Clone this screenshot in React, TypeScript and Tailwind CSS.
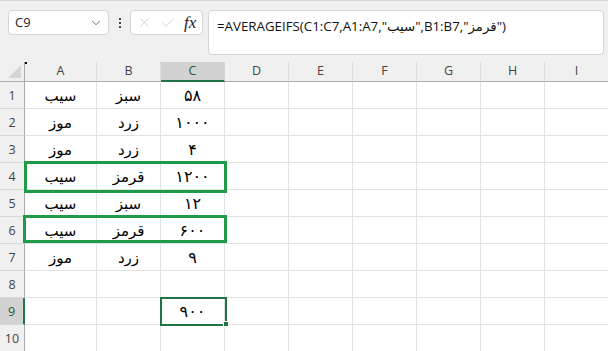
import React from 'react';
import { ChevronDown, X, Check } from 'lucide-react';
import clsx from 'clsx';

const cols = ['A', 'B', 'C', 'D', 'E', 'F', 'G', 'H', 'I'];

// rows 1..10, only A-C hold values
const data: string[][] = [
  ['سیب', 'سبز', '۵۸'],
  ['موز', 'زرد', '۱۰۰۰'],
  ['موز', 'زرد', '۴'],
  ['سیب', 'قرمز', '۱۲۰۰'],
  ['سیب', 'سبز', '۱۲'],
  ['سیب', 'قرمز', '۶۰۰'],
  ['موز', 'زرد', '۹'],
  [],
  ['', '', '۹۰۰'],
  [],
];

const uiFont = { fontFamily: '"Open Sans", "Noto Sans", sans-serif' };
const isNum = (v: string) => /^[۰-۹]+$/.test(v);

const Toolbar = () => (
  <div className="flex h-[61px] items-start gap-0 pl-[8px] pt-[9px]">
    <div className="flex h-[25px] w-[101px] items-center justify-between rounded-[4px] border border-[#d4d4d4] bg-white pl-[6px] pr-[5px]">
      <span className="text-[13px] text-[#222]">C9</span>
      <ChevronDown size={14} strokeWidth={1.5} className="text-[#555]" />
    </div>
    <div className="flex h-[25px] w-[21px] flex-col items-center justify-center gap-[2px]">
      <span className="block h-[2px] w-[2px] bg-[#444]" />
      <span className="block h-[2px] w-[2px] bg-[#444]" />
      <span className="block h-[2px] w-[2px] bg-[#444]" />
    </div>
    <div className="flex h-[25px] w-[73px] items-center rounded-[4px] border border-[#d4d4d4] bg-white pl-[6px]">
      <X size={15} strokeWidth={1} className="text-[#b8b8b8]" />
      <Check size={16} strokeWidth={1} className="ml-[8px] text-[#b8b8b8]" />
      <span
        className="ml-[8px] text-[17px] italic text-[#222]"
        style={{ fontFamily: '"Liberation Serif", serif' }}
      >
        fx
      </span>
    </div>
    <div className="ml-[5px] h-[45px] w-[396px] rounded-[4px] border border-[#d4d4d4] bg-white pl-[8px] pt-[2px]">
      <span dir="ltr" className="text-[13.3px] text-[#111]" style={{ fontFamily: '"Open Sans", "DejaVu Sans", sans-serif' }}>
        =AVERAGEIFS(C1:C7,A1:A7,"سیب",B1:B7,"قرمز")
      </span>
    </div>
  </div>
);

const Sheet = () => (
  <div className="grid grid-cols-[25px_72px_repeat(8,64px)] grid-rows-[20px_repeat(10,27px)]">
    {/* corner */}
    <div className="relative border-b border-r border-[#ababab]">
      <div className="absolute bottom-[3px] right-[3px] h-0 w-0 border-b-[13px] border-l-[13px] border-b-[#d6d6d6] border-l-transparent" />
    </div>
    {cols.map((c) => (
      <div
        key={c}
        className={clsx(
          'flex items-center justify-center border-r text-[12.5px]',
          c === 'C'
            ? 'border-b-2 border-b-[#217346] border-r-[#d4d4d4] bg-[#d2d2d2] text-[#1d5c38]'
            : 'border-b border-b-[#ababab] border-r-[#dcdcdc] text-[#444]'
        )}
      >
        {c}
      </div>
    ))}
    {data.map((row, r) => (
      <React.Fragment key={r}>
        <div
          className={clsx(
            'flex items-end justify-center border-b border-b-[#d8d8d8] pb-[2px] text-[12.5px]',
            r === 8
              ? 'border-r-2 border-r-[#217346] bg-[#d2d2d2] text-[#1d5c38]'
              : 'border-r border-r-[#ababab] text-[#444]'
          )}
        >
          {r + 1}
        </div>
        {cols.map((c, ci) => {
          const v = row[ci] ?? '';
          return (
            <div
              key={c}
              dir="rtl"
              className={clsx(
                'flex items-center justify-center border-b border-r border-[#e1e1e1] bg-white text-black',
                isNum(v) ? 'pt-[2px] text-[16px] tracking-[1.5px]' : 'pt-[3px] text-[15px]'
              )}
              style={{ fontFamily: '"DejaVu Sans", sans-serif' }}
            >
              {v}
            </div>
          );
        })}
      </React.Fragment>
    ))}
  </div>
);

export default function App() {
  return (
    <div className="relative h-[351px] w-[608px] overflow-hidden border-t border-[#d8d8d8] bg-[#f0f0f0]" style={uiFont}>
      <Toolbar />
      <Sheet />
      {/* highlighted rows */}
      <div className="absolute left-[24px] top-[160px] h-[32px] w-[203px] border-[3px] border-[#1f9a48]" />
      <div className="absolute left-[23px] top-[214px] h-[28px] w-[204px] border-[3px] border-[#1f9a48]" />
      {/* active cell C9 */}
      <div className="absolute left-[160px] top-[296px] h-[29px] w-[67px] border-2 border-[#217346]" />
      <div className="absolute left-[223px] top-[320px] h-[6px] w-[6px] border border-white bg-[#217346]" />
      <div className="absolute left-[25px] top-[61px] h-[2px] w-[2px] bg-black" />
    </div>
  );
}
